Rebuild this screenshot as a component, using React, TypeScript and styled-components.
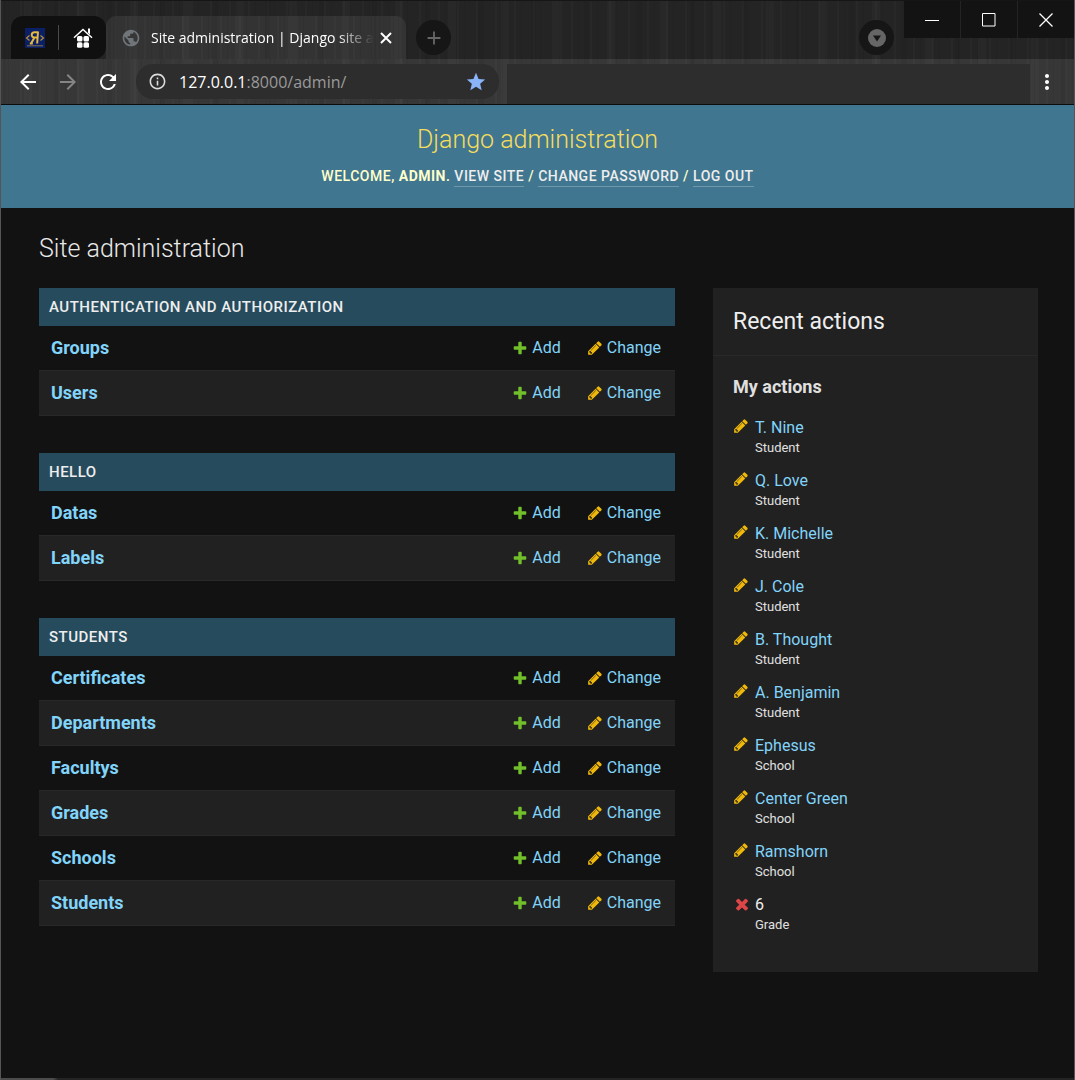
import React from "react";
import styled, { createGlobalStyle } from "styled-components";
import {
  MdAdd,
  MdArrowBack,
  MdArrowForward,
  MdInfoOutline,
  MdMoreVert,
  MdPublic,
  MdRefresh,
  MdStar,
} from "react-icons/md";

const GlobalStyle = createGlobalStyle`
  * { box-sizing: border-box; }
  body {
    margin: 0;
    background: #121212;
    color: #eeeeee;
    font-family: Roboto, "Liberation Sans", sans-serif;
    font-size: 16px;
  }
  button { border: 0; padding: 0; background: none; color: inherit; font: inherit; cursor: pointer; }
  h1, h2, h3, ul { margin: 0; padding: 0; }
`;

const woodGrain = `
  repeating-linear-gradient(90deg, rgba(255,255,255,0.02) 0 2px, transparent 2px 7px, rgba(0,0,0,0.06) 7px 8px, transparent 8px 19px),
  repeating-linear-gradient(90deg, rgba(0,0,0,0.06) 0 5px, transparent 5px 23px, rgba(255,255,255,0.02) 23px 31px, transparent 31px 53px)
`;

const chromeFont = `"Open Sans", "Noto Sans", sans-serif`;

const Window = styled.div`
  display: flex;
  flex-direction: column;
  min-height: 100vh;
  border: solid #555555;
  border-width: 0 1px;
`;

const TabStrip = styled.div`
  display: flex;
  align-items: flex-end;
  height: 59px;
  padding-left: 10px;
  border-top: 1px solid #161616;
  background: ${woodGrain}, #242424;
  font-family: ${chromeFont};
`;

const PinnedTabs = styled.div`
  display: flex;
  align-items: center;
  height: 43px;
  border-radius: 12px 12px 12px 0;
  background: #101010;
`;

const PinnedTab = styled.button`
  display: flex;
  align-items: center;
  justify-content: center;
  width: 47px;
  height: 43px;
`;

const PinDivider = styled.span`
  width: 1px;
  height: 25px;
  background: #4a4a4a;
`;

const ActiveTab = styled.div`
  display: flex;
  align-items: center;
  flex: 0 1 300px;
  min-width: 0;
  height: 43px;
  padding: 0 14px 0 15px;
  border-radius: 10px 10px 0 0;
  background: ${woodGrain}, #333333;
  color: #ffffff;
`;

const TabTitle = styled.span`
  flex: 1;
  min-width: 0;
  margin-left: 10px;
  overflow: hidden;
  white-space: nowrap;
  font-size: 14px;
  line-height: 20px;
  mask-image: linear-gradient(90deg, #000 calc(100% - 44px), transparent calc(100% - 6px));
`;

const CloseTab = styled.button`
  display: flex;
  flex: none;
`;

const RoundButton = styled.button`
  display: flex;
  align-items: center;
  justify-content: center;
  align-self: flex-end;
  flex: none;
  width: 35px;
  height: 35px;
  margin: 0 10px 4px;
  border-radius: 50%;
  background: #161616;
  color: #666666;
`;

const WindowControls = styled.div`
  display: flex;
  align-self: flex-start;
  gap: 1px;
`;

const WindowButton = styled.button`
  display: flex;
  align-items: center;
  justify-content: center;
  width: 56px;
  height: 37px;
  background: #131313;
  color: #ffffff;
`;

const Spacer = styled.div`
  flex: 1;
`;

const Toolbar = styled.div`
  display: flex;
  align-items: center;
  height: 46px;
  padding-left: 15px;
  border-bottom: 1px solid #0c0c0c;
  background: ${woodGrain}, #373737;
  font-family: ${chromeFont};
`;

const NavButton = styled.button<{ $muted?: boolean }>`
  display: flex;
  margin-right: 16px;
  color: ${(p) => (p.$muted ? "#858585" : "#ffffff")};
`;

const AddressBar = styled.form`
  display: flex;
  align-items: center;
  flex: 0 1 363px;
  min-width: 0;
  height: 35px;
  padding: 0 12px;
  border-radius: 17px;
  background: #2d2d2d;
  color: #dddddd;
  font-size: 16px;
`;

const Host = styled.label`
  margin-left: 12px;
  color: #ffffff;
`;

const PathInput = styled.input`
  flex: 1;
  min-width: 0;
  padding: 0;
  border: 0;
  outline: 0;
  background: none;
  color: #9a9a9a;
  font: inherit;
`;

const BookmarkButton = styled.button`
  display: flex;
  color: #8ab4f8;
`;

const ExtensionArea = styled.div`
  flex: 1;
  height: 40px;
  margin-left: 8px;
  align-self: flex-end;
  background: #2d2d2d;
`;

const MenuButton = styled.button`
  display: flex;
  justify-content: center;
  width: 34px;
  margin-right: 10px;
  color: #ffffff;
`;

const SiteHeader = styled.header`
  display: flex;
  flex-direction: column;
  align-items: center;
  gap: 11px;
  padding: 20px 38px 22px;
  background: #417690;
  color: #ffffcc;
`;

const SiteName = styled.h1`
  font-size: 25px;
  font-weight: 300;
  line-height: 30px;
  color: #f5dd5d;
`;

const UserTools = styled.div`
  font-size: 14px;
  font-weight: 500;
  line-height: 20px;
  letter-spacing: 0.5px;
  text-transform: uppercase;
`;

const ToolLink = styled.a`
  padding-bottom: 2px;
  border-bottom: 1px solid rgba(255, 255, 255, 0.25);
  color: #eeeeee;
  text-decoration: none;
`;

const Content = styled.main`
  flex: 1;
  padding: 26px 36px 38px 38px;
`;

const PageTitle = styled.h1`
  margin-bottom: 24px;
  font-size: 25px;
  font-weight: 300;
  line-height: 30px;
  color: #e8e8e8;
`;

const Columns = styled.div`
  display: grid;
  grid-template-columns: minmax(0, 1fr) 325px;
  align-items: start;
  gap: 38px;

  @media (max-width: 767px) {
    grid-template-columns: minmax(0, 1fr);
  }
`;

const AppList = styled.div`
  display: flex;
  flex-direction: column;
  gap: 37px;
`;

const AppTable = styled.table`
  width: 100%;
  border-collapse: collapse;
`;

const AppCaption = styled.caption`
  height: 38px;
  padding: 0 10px;
  background: #264b5d;
  color: #eeeeee;
  font-size: 15px;
  font-weight: 500;
  line-height: 38px;
  letter-spacing: 0.5px;
  text-align: left;
  text-transform: uppercase;
`;

const ModelRow = styled.tr`
  height: 45px;
  box-shadow: inset 0 -1px #282828;

  &:nth-child(even) {
    background: #212121;
  }
`;

const ModelName = styled.th`
  width: 100%;
  padding: 0 12px 2px;
  font-size: 18px;
  font-weight: 700;
  text-align: left;
`;

const ModelAction = styled.td`
  padding: 0 14px 2px 12px;
  white-space: nowrap;
`;

const Link = styled.a`
  color: #81d4fa;
  text-decoration: none;
`;

const IconLink = styled(Link)`
  display: flex;
  align-items: center;
  gap: 4px;
`;

const Sidebar = styled.aside`
  padding-bottom: 37px;
  background: #212121;
`;

const SidebarTitle = styled.h2`
  padding: 0 20px;
  border-bottom: 1px solid #282828;
  font-size: 23px;
  font-weight: 400;
  line-height: 67px;
`;

const SidebarSubtitle = styled.h3`
  padding: 20px;
  font-size: 18px;
  font-weight: 700;
  line-height: 22px;
  color: #e0e0e0;
`;

const ActionList = styled.ul`
  display: flex;
  flex-direction: column;
  gap: 13px;
  padding: 0 20px;
  list-style: none;
`;

const ActionItem = styled.li`
  display: grid;
  grid-template-columns: 16px 1fr;
  grid-template-rows: 20px 20px;
  column-gap: 6px;
  align-items: start;
  line-height: 20px;
`;

const ActionKind = styled.span`
  grid-column: 2;
  font-size: 13px;
  color: #e0e0e0;
`;

const BottomEdge = styled.div`
  height: 2px;
  background: linear-gradient(90deg, #4c4c4c 52px, #242424 57px);
`;

const glyphs = {
  add: {
    color: "#70bf2b",
    path: "M1600 796v192q0 40-28 68t-68 28h-416v416q0 40-28 68t-68 28h-192q-40 0-68-28t-28-68v-416h-416q-40 0-68-28t-28-68v-192q0-40 28-68t68-28h416v-416q0-40 28-68t68-28h192q40 0 68 28t28 68v416h416q40 0 68 28t28 68z",
  },
  change: {
    color: "#efb80b",
    path: "M491 1536l91-91-235-235-91 91v107h128v128h107zm523-928q0-22-22-22-10 0-17 7l-542 542q-7 7-7 17 0 22 22 22 10 0 17-7l542-542q7-7 7-17zm-54-192l416 416-832 832h-416v-416zm683 96q0 53-37 90l-166 166-416-416 166-165q36-38 90-38 53 0 91 38l235 234q37 39 37 91z",
  },
  remove: {
    color: "#dd4646",
    path: "M1490 1322q0 40-28 68l-136 136q-28 28-68 28t-68-28l-294-294-294 294q-28 28-68 28t-68-28l-136-136q-28-28-28-68t28-68l294-294-294-294q-28-28-28-68t28-68l136-136q28-28 68-28t68 28l294 294 294-294q28-28 68-28t68 28l136 136q28 28 28 68t-28 68l-294 294 294 294q28 28 28 68z",
  },
};

function Glyph({ kind, size = 16 }: { kind: keyof typeof glyphs; size?: number }) {
  return (
    <svg width={size} height={size} viewBox="0 0 1792 1792" fill={glyphs[kind].color} aria-hidden>
      <path d={glyphs[kind].path} />
    </svg>
  );
}

function CodeLogo() {
  return (
    <svg width="20" height="20" viewBox="0 0 20 20" fill="none" aria-hidden>
      <rect width="20" height="20" fill="#0b1f66" />
      <path d="M4.500 7.500 1.500 10l3 2.500M15.500 7.500l3 2.500-3 2.500" stroke="#b8933a" strokeWidth="1.100" />
      <path d="M13 3.500l-.8 12M13 4.200H9.500c-3.600 0-3.800 5.300-.2 5.300h3M9.500 9.500l-3.500 6M4.800 15.500h3" stroke="#e6b83e" strokeWidth="2" />
      <path d="M2 17.800h16" stroke="#a98a3c" strokeWidth="0.800" />
    </svg>
  );
}

function HouseIcon() {
  return (
    <svg width="20" height="20" viewBox="0 0 20 20" fill="#ffffff" aria-hidden>
      <path d="M1 9.700 10 1.500l9 8.200" fill="none" stroke="#ffffff" strokeWidth="1.500" />
      <path d="M15 .5h2v6l-2-1.800z" />
      <rect x="4" y="8" width="5.500" height="5.500" rx="1.500" />
      <rect x="10.500" y="8" width="5.500" height="5.500" rx="1.500" />
      <rect x="4" y="14.300" width="5.500" height="5.500" rx="1.500" />
      <rect x="10.500" y="14.300" width="5.500" height="5.500" rx="1.500" />
    </svg>
  );
}

function BrowserChrome() {
  return (
    <>
      <TabStrip>
        <PinnedTabs>
          <PinnedTab aria-label="Code tab"><CodeLogo /></PinnedTab>
          <PinDivider />
          <PinnedTab aria-label="Home tab"><HouseIcon /></PinnedTab>
        </PinnedTabs>
        <ActiveTab>
          <MdPublic size={20} color="#70757a" />
          <TabTitle>Site administration | Django site a</TabTitle>
          <CloseTab aria-label="Close tab">
            <svg width="12" height="12" stroke="currentColor" strokeWidth="2" aria-hidden>
              <path d="M1 1l10 10M11 1L1 11" />
            </svg>
          </CloseTab>
        </ActiveTab>
        <RoundButton aria-label="New tab"><MdAdd size={22} /></RoundButton>
        <Spacer />
        <RoundButton aria-label="Search tabs">
          <svg width="18" height="18" viewBox="0 0 18 18" aria-hidden>
            <circle cx="9" cy="9" r="9" fill="#666666" />
            <path d="M5 6.500h8L9 12.500z" fill="#161616" />
          </svg>
        </RoundButton>
        <WindowControls>
          <WindowButton aria-label="Minimize">
            <svg width="14" height="14" stroke="currentColor" aria-hidden><path d="M0 7.500h14" /></svg>
          </WindowButton>
          <WindowButton aria-label="Maximize">
            <svg width="14" height="14" stroke="currentColor" fill="none" aria-hidden><path d="M.5.500h12.500v12.500H.5z" /></svg>
          </WindowButton>
          <WindowButton aria-label="Close">
            <svg width="14" height="14" stroke="currentColor" strokeWidth="1.300" aria-hidden><path d="M.5.500l13 13M13.500.500l-13 13" /></svg>
          </WindowButton>
        </WindowControls>
      </TabStrip>
      <Toolbar>
        <NavButton aria-label="Back"><MdArrowBack size={24} /></NavButton>
        <NavButton aria-label="Forward" $muted><MdArrowForward size={24} /></NavButton>
        <NavButton aria-label="Reload"><MdRefresh size={24} /></NavButton>
        <AddressBar onSubmit={(e) => e.preventDefault()}>
          <MdInfoOutline size={19} />
          <Host htmlFor="address">127.0.0.1</Host>
          <PathInput id="address" type="text" defaultValue=":8000/admin/" />
          <BookmarkButton type="button" aria-label="Bookmark"><MdStar size={22} /></BookmarkButton>
        </AddressBar>
        <ExtensionArea />
        <MenuButton aria-label="Menu"><MdMoreVert size={24} /></MenuButton>
      </Toolbar>
    </>
  );
}

const apps = [
  { name: "Authentication and Authorization", models: ["Groups", "Users"] },
  { name: "Hello", models: ["Datas", "Labels"] },
  { name: "Students", models: ["Certificates", "Departments", "Facultys", "Grades", "Schools", "Students"] },
];

const actions = [
  ["T. Nine", "Student"],
  ["Q. Love", "Student"],
  ["K. Michelle", "Student"],
  ["J. Cole", "Student"],
  ["B. Thought", "Student"],
  ["A. Benjamin", "Student"],
  ["Ephesus", "School"],
  ["Center Green", "School"],
  ["Ramshorn", "School"],
];

export default function App() {
  return (
    <Window>
      <GlobalStyle />
      <BrowserChrome />
      <SiteHeader>
        <SiteName>Django administration</SiteName>
        <UserTools>
          Welcome, <strong>admin</strong>. <ToolLink href="#site">View site</ToolLink> /{" "}
          <ToolLink href="#password">Change password</ToolLink> / <ToolLink href="#logout">Log out</ToolLink>
        </UserTools>
      </SiteHeader>
      <Content>
        <PageTitle>Site administration</PageTitle>
        <Columns>
          <AppList>
            {apps.map((app) => (
              <AppTable key={app.name}>
                <AppCaption>{app.name}</AppCaption>
                <tbody>
                  {app.models.map((model) => (
                    <ModelRow key={model}>
                      <ModelName scope="row"><Link href="#model">{model}</Link></ModelName>
                      <ModelAction><IconLink href="#add"><Glyph kind="add" />Add</IconLink></ModelAction>
                      <ModelAction><IconLink href="#change"><Glyph kind="change" />Change</IconLink></ModelAction>
                    </ModelRow>
                  ))}
                </tbody>
              </AppTable>
            ))}
          </AppList>
          <Sidebar>
            <SidebarTitle>Recent actions</SidebarTitle>
            <SidebarSubtitle>My actions</SidebarSubtitle>
            <ActionList>
              {actions.map(([name, kind]) => (
                <ActionItem key={name}>
                  <Glyph kind="change" />
                  <Link href="#entry">{name}</Link>
                  <ActionKind>{kind}</ActionKind>
                </ActionItem>
              ))}
              <ActionItem>
                <Glyph kind="remove" size={18} />
                <span>6</span>
                <ActionKind>Grade</ActionKind>
              </ActionItem>
            </ActionList>
          </Sidebar>
        </Columns>
      </Content>
      <BottomEdge />
    </Window>
  );
}
